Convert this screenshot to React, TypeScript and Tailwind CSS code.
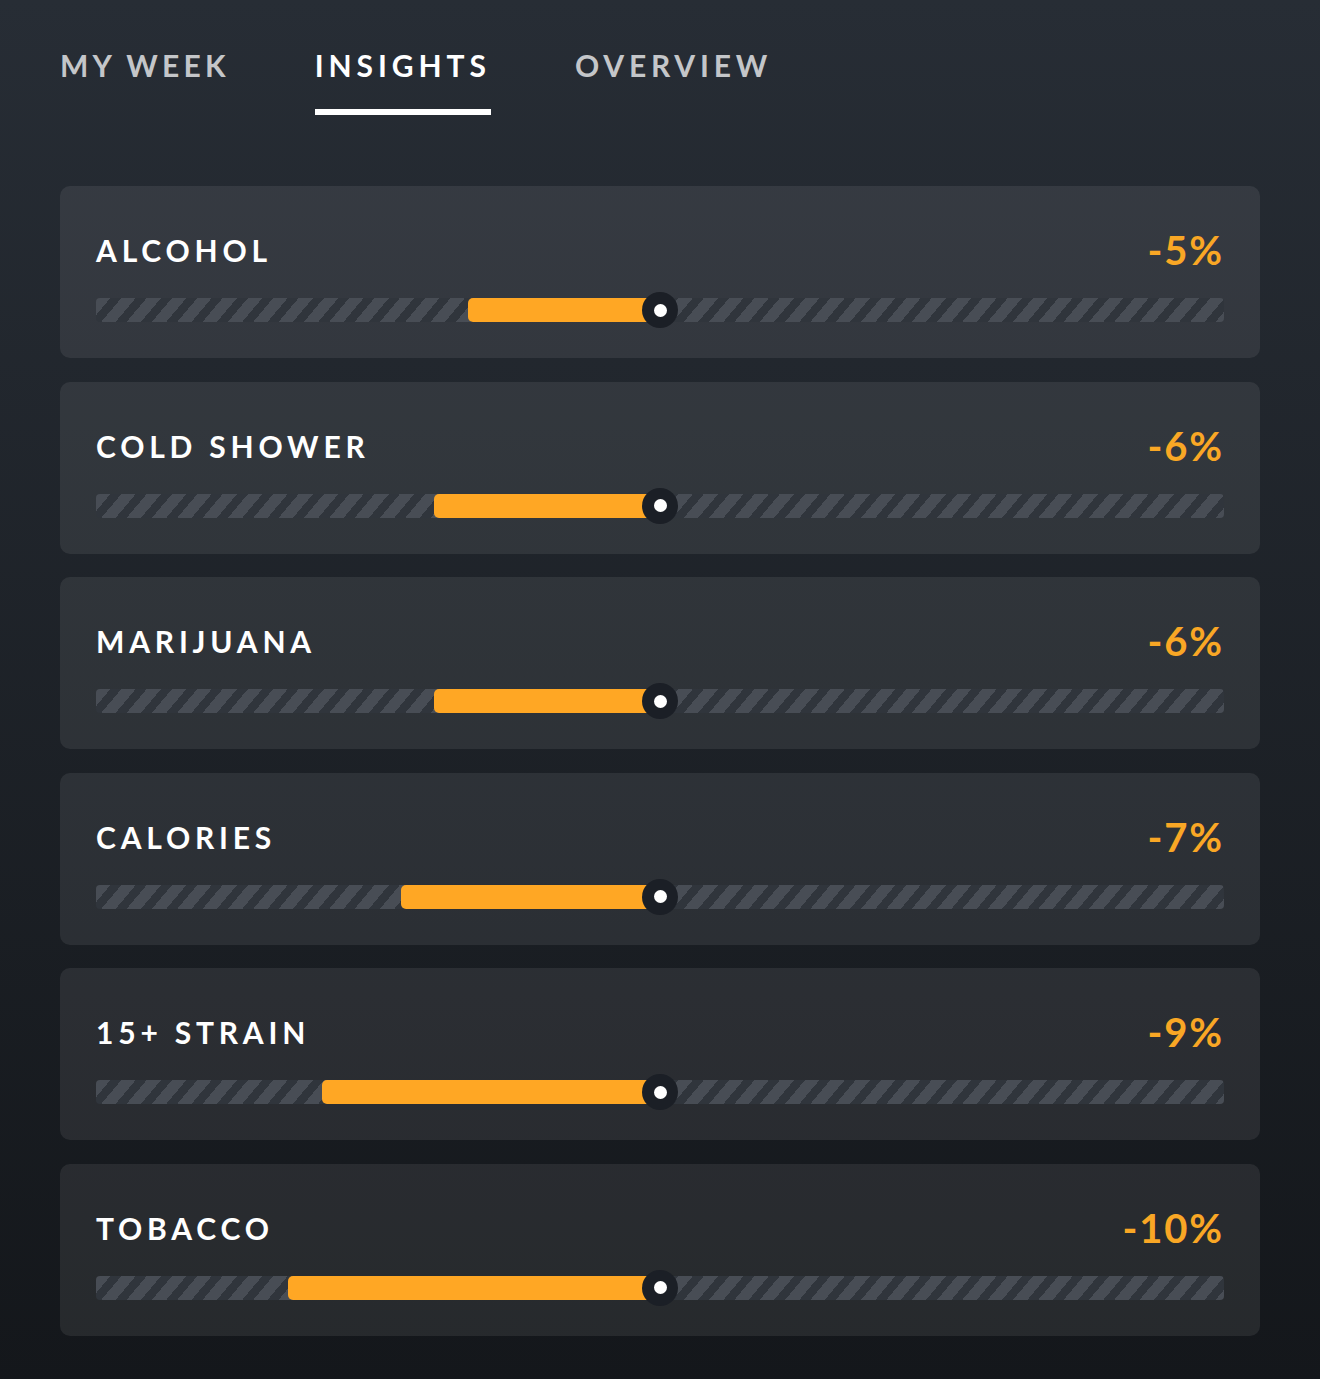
import React from 'react'

const rows = [
  { name: 'ALCOHOL', pct: '-5%', start: 372 },
  { name: 'COLD SHOWER', pct: '-6%', start: 338 },
  { name: 'MARIJUANA', pct: '-6%', start: 338 },
  { name: 'CALORIES', pct: '-7%', start: 305 },
  { name: '15+ STRAIN', pct: '-9%', start: 226 },
  { name: 'TOBACCO', pct: '-10%', start: 192 },
]

const tabs = ['MY WEEK', 'INSIGHTS', 'OVERVIEW']

function Track({ start }: { start: number }) {
  return (
    <div className="relative mt-[28px] h-[24px] rounded-[4px] bg-[#30353c] bg-[repeating-linear-gradient(130deg,#484d55_0px,#484d55_11px,transparent_11px,transparent_19.4px)]">
      {/* filled part runs from the value up to the centre, the knob covers its end */}
      <div
        className="absolute top-0 bottom-0 right-1/2 rounded-l-[5px] bg-[#ffa724]"
        style={{ left: start }}
      />
      <div className="absolute left-1/2 top-1/2 flex h-[36px] w-[36px] -translate-x-1/2 -translate-y-1/2 items-center justify-center rounded-full bg-[#1b1f26]">
        <div className="h-[13px] w-[13px] rounded-full bg-white" />
      </div>
    </div>
  )
}

export default function App() {
  return (
    <div className="min-h-[1379px] bg-gradient-to-b from-[#272d35] to-[#14171b] px-[60px] pt-[50px] pb-[44px] font-['Lato',sans-serif]">
      <div className="flex">
        {tabs.map((t, i) => (
          <div key={t} className={'flex flex-col ' + (i === 1 ? 'ml-[85px]' : i === 2 ? 'ml-[84px]' : '')}>
            <div
              className={
                'text-[30px] leading-[30px] font-bold ' +
                (t === 'INSIGHTS' ? 'tracking-[0.165em] text-white' : t === 'MY WEEK' ? 'tracking-[0.14em] text-[#c4c6c9]' : 'tracking-[0.16em] text-[#c4c6c9]')
              }
            >
              {t}
            </div>
            <div className={'mt-[29px] h-[6px] ' + (t === 'INSIGHTS' ? 'bg-white' : 'bg-transparent')} />
          </div>
        ))}
      </div>

      <div className="mt-[71px] flex flex-col gap-[23.6px]">
        {rows.map((r) => (
          <div key={r.name} className="rounded-[10px] bg-white/[0.08] px-[36px] pt-[44px] pb-[36px]">
            <div className="flex items-start justify-between">
              <div className="mt-[5px] text-[30px] leading-[30px] font-bold tracking-[0.16em] text-white">
                {r.name}
              </div>
              <div className="mr-[calc(2px_-_0.045em)] text-[40px] leading-[40px] font-bold tracking-[0.045em] text-[#f9a725]">
                {r.pct}
              </div>
            </div>
            <Track start={r.start} />
          </div>
        ))}
      </div>
    </div>
  )
}
